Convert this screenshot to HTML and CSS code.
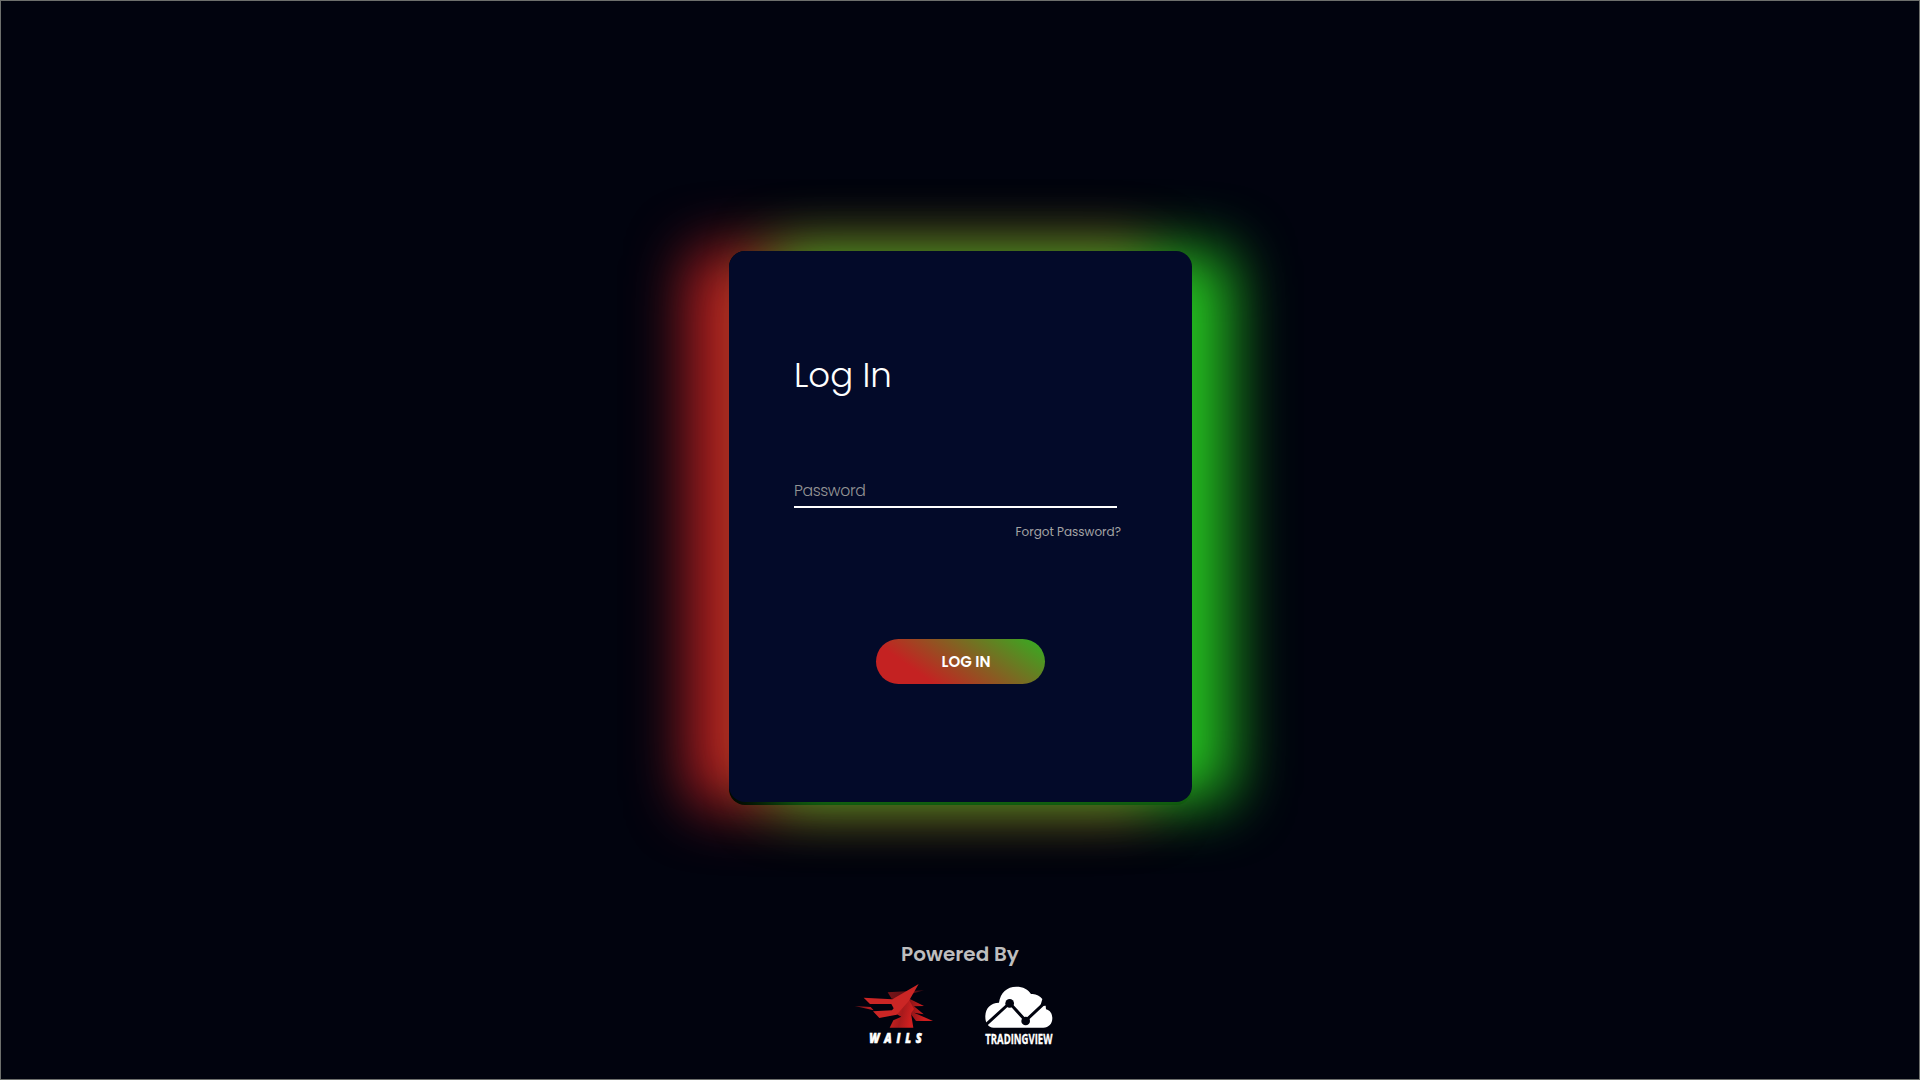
FILE: index.html
```
<!DOCTYPE html>
<html lang="en">
<head>
<meta charset="utf-8">
<title>Log In</title>
<link rel="stylesheet" href="styles.css">
</head>
<body>
<main class="page">
  <div class="glow">
    <form class="card">
      <h1 class="title">Log In</h1>
      <input class="password" type="password" placeholder="Password">
      <a class="forgot">Forgot Password?</a>
      <button class="submit" type="button">LOG IN</button>
    </form>
  </div>
  <footer class="footer">
    <p class="powered">Powered By</p>
    <div class="logos">
      <svg class="wails" viewBox="45 156 234 192">
        <defs>
          <linearGradient id="neck" x1="0" y1="0" x2="1" y2="0.3">
            <stop offset="0.2" stop-color="#c9211f"/><stop offset="0.6" stop-color="#a81a1c"/><stop offset="1" stop-color="#cf1f1f"/>
          </linearGradient>
          <linearGradient id="horn" x1="0" y1="0" x2="1" y2="0">
            <stop offset="0" stop-color="#7a1418"/><stop offset="1" stop-color="#3d0a12"/>
          </linearGradient>
          <linearGradient id="mane" x1="0" y1="0" x2="1" y2="0">
            <stop offset="0" stop-color="#6e1115"/><stop offset="0.7" stop-color="#cf1d1e"/>
          </linearGradient>
          <linearGradient id="dart" x1="0" y1="0" x2="1" y2="0">
            <stop offset="0" stop-color="#6c1218"/><stop offset="1" stop-color="#c91f21"/>
          </linearGradient>
        </defs>
        <path fill="url(#horn)" d="M143 187 252 181 216 191 190 207 155 206Z"/>
        <path fill="url(#dart)" d="M44 228 92 231 101 241Z"/>
        <path fill="url(#mane)" d="M205 205 252 228 222 229 251 253 222 248 279 273 228 273 208 246 190 225Z"/>
        <path fill="url(#neck)" d="M170 225 206 207 222 237 213 250 220 293 149 293 160 271 184 260 165 250Z"/>
        <path fill="#cb2625" d="M236 162 207 212 170 254 118 264 99 244 156 241 161 235 154 222 90 222 71 203 157 208Z"/>
        <g class="wails-name" transform="translate(88 338) scale(.8 1)"><text>WAILS</text></g>
      </svg>
      <svg class="tradingview" viewBox="432 156 210 192">
        <path fill="#fff" d="M461 293C443 292 435 276 436 257C437 234 452 219 477 218C481 188 501 170 529 170C549 170 565 178 573 192C587 190 599 197 607 207L601 228 617 227 618 238C631 241 637 252 637 265C637 282 626 293 610 293Z"/>
        <path class="chart" d="M438 284 509 219 557 272 622 211"/>
        <circle class="node" cx="509" cy="220" r="13"/>
        <circle class="node" cx="557" cy="273" r="13"/>
        <text class="tv-name" x="436" y="341" textLength="201" lengthAdjust="spacingAndGlyphs">TRADINGVIEW</text>
      </svg>
    </div>
  </footer>
</main>
</body>
</html>
```
FILE: styles.css
```
* { box-sizing: border-box; }
body {
  margin: 0;
  background: #01030e;
  color: #fff;
  font-family: Poppins, Inter, sans-serif;
}
.page {
  display: flex;
  flex-direction: column;
  align-items: center;
  height: 1080px;
  padding-top: 250px;
  border: 1px solid #6d6f6c;
  overflow: hidden;
}
.glow {
  width: 463px;
  height: 554px;
  margin-left: 1px;
  border-radius: 16px;
  background: #000;
  box-shadow: -40px 0 60px #c02222;
}
.card {
  display: flex;
  flex-direction: column;
  height: 551px;
  padding: 100px 65px 0;
  border-radius: 16px;
  background: #030a29;
  box-shadow: 40px 0 60px #24c020;
}
.title {
  margin: 0;
  font-size: 34px;
  line-height: 48px;
  font-weight: 300;
}
.password {
  width: 323px;
  height: 40px;
  margin: 69px 0 0;
  padding: 6px 0 0;
  border: 0;
  border-bottom: 2px solid #fff;
  background: none;
  color: #fff;
  font: 300 15.7px Poppins, Inter, sans-serif;
  letter-spacing: -0.4px;
}
.password::placeholder { color: #959595; opacity: 1; }
.forgot {
  align-self: flex-end;
  margin: 14px 6px 0 0;
  color: #a4a4a4;
  font-size: 12px;
  line-height: 20px;
}
.submit {
  align-self: center;
  width: 169px;
  height: 45px;
  margin-top: 97px;
  padding: 0 0 0 11px;
  border: 0;
  border-radius: 23px;
  background: linear-gradient(35deg, #c42222 25%, #32b022);
  color: #fff;
  font: 600 15px Poppins, Inter, sans-serif;
}
.footer {
  display: flex;
  flex-direction: column;
  align-items: center;
  margin-top: 134px;
}
.powered {
  margin: 0;
  color: #bebebe;
  font-size: 20px;
  line-height: 30px;
  font-weight: 600;
}
.logos {
  display: flex;
  gap: 51px;
  margin: 13px 11px 0 0;
}
.wails { width: 78px; height: 64px; overflow: visible; }
.tradingview { width: 70px; height: 64px; overflow: visible; }
.wails-name { fill: #fff; stroke: #fff; stroke-width: 2; font: italic 800 41px "Open Sans", sans-serif; letter-spacing: 18px; }
.tv-name { fill: #fff; stroke: #fff; stroke-width: 1; font: 700 40px "Open Sans", sans-serif; }
.chart { fill: none; stroke: #01030e; stroke-width: 9; }
.node { fill: #01030e; }
```
